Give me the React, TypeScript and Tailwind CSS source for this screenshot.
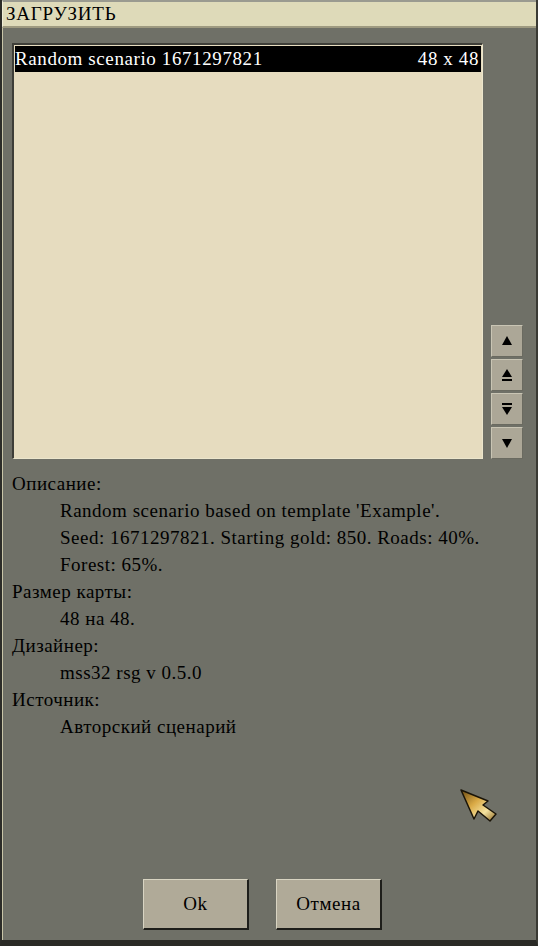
import React from 'react';

const serif = { fontFamily: '"Liberation Serif", "DejaVu Serif", serif' };

const ScrollBtn: React.FC<{ kind: 'top' | 'up' | 'down' | 'bottom' }> = ({ kind }) => (
  <div className="w-[32px] h-[32px] bg-[#aca797] border-t border-l border-[#c9c5b4] border-b border-r border-b-[#6a6a60] border-r-[#6a6a60] flex items-center justify-center">
    <svg width="14" height="16" viewBox="0 0 14 16">
      {kind === 'top' && <polygon points="7,3 12,12 2,12" fill="#000" />}
      {kind === 'up' && (
        <>
          <polygon points="7,2 12,10 2,10" fill="#000" />
          <rect x="2" y="12" width="10" height="2" fill="#000" />
        </>
      )}
      {kind === 'down' && (
        <>
          <rect x="2" y="2" width="10" height="2" fill="#000" />
          <polygon points="2,6 12,6 7,14" fill="#000" />
        </>
      )}
      {kind === 'bottom' && <polygon points="2,4 12,4 7,13" fill="#000" />}
    </svg>
  </div>
);

const Line: React.FC<{ indent?: boolean; children: React.ReactNode }> = ({ indent, children }) => (
  <div className={`h-[27px] leading-[27px] whitespace-nowrap ${indent ? 'pl-[48px]' : ''}`}>{children}</div>
);

const Button: React.FC<{ label: string }> = ({ label }) => (
  <div className="w-[106px] h-[51px] bg-[#b0aa98] border-t border-l border-[#d8d4c2] border-b-2 border-r-2 border-b-[#1e1e1a] border-r-[#1e1e1a] flex items-center justify-center text-[19px] tracking-[0.6px] text-black">
    {label}
  </div>
);

export default function App() {
  return (
    <div
      className="w-[538px] h-[946px] bg-[#6f7067] flex flex-col border-l-2 border-l-[#2c2c28] border-r-2 border-r-[#3a3a34] border-b-[6px] border-b-[#2a2a26] relative overflow-hidden"
      style={serif}
    >
      {/* title */}
      <div className="h-[28px] bg-[#dedab9] border-t-2 border-t-[#9a9a90] border-l border-l-[#f0edd6] border-b-2 border-b-[#9e9a80] flex items-center pl-[3px] text-[19px] tracking-[0.8px] text-black">
        ЗАГРУЗИТЬ
      </div>

      <div className="flex-1 flex flex-col border-l border-l-[#c8c5a8]">
        {/* list + scroll */}
        <div className="flex items-end mt-[15px] pl-[9px] gap-[8px]">
          <div className="w-[471px] h-[416px] bg-[#e6dcbf] border-t-2 border-l-2 border-[#3e3e38] border-b border-r border-b-[#ece6cc] border-r-[#ece6cc] p-[1px]">
            <div className="h-[26px] bg-black text-white flex items-center justify-between pl-[0px] pr-[2px] text-[19px] tracking-[0.6px]">
              <span>Random scenario 1671297821</span>
              <span>48 x 48</span>
            </div>
          </div>
          <div className="flex flex-col gap-[2px]">
            <ScrollBtn kind="top" />
            <ScrollBtn kind="up" />
            <ScrollBtn kind="down" />
            <ScrollBtn kind="bottom" />
          </div>
        </div>

        {/* description */}
        <div className="mt-[11px] pl-[9px] text-[19px] tracking-[0.5px] text-black">
          <Line>Описание:</Line>
          <Line indent>Random scenario based on template 'Example'.</Line>
          <Line indent>Seed: 1671297821. Starting gold: 850. Roads: 40%.</Line>
          <Line indent>Forest: 65%.</Line>
          <Line>Размер карты:</Line>
          <Line indent>48 на 48.</Line>
          <Line>Дизайнер:</Line>
          <Line indent>mss32 rsg v 0.5.0</Line>
          <Line>Источник:</Line>
          <Line indent>Авторский сценарий</Line>
        </div>

        <div className="flex-1" />

        {/* buttons */}
        <div className="flex gap-[27px] pl-[140px] mb-[10px]">
          <Button label="Ok" />
          <Button label="Отмена" />
        </div>
      </div>

      {/* mouse cursor */}
      <svg className="absolute left-[456px] top-[788px]" width="44" height="42" viewBox="0 0 44 42">
        <defs>
          <linearGradient id="g" x1="0" y1="0" x2="1" y2="1">
            <stop offset="0" stopColor="#6b4a12" />
            <stop offset="0.4" stopColor="#d9a945" />
            <stop offset="0.7" stopColor="#f5e3a0" />
            <stop offset="1" stopColor="#8a6420" />
          </linearGradient>
        </defs>
        <polygon points="3,2 30,13 25,17 38,26 32,33 20,23 16,31" fill="url(#g)" stroke="#1a1408" strokeWidth="1.5" strokeLinejoin="round" />
      </svg>
    </div>
  );
}
